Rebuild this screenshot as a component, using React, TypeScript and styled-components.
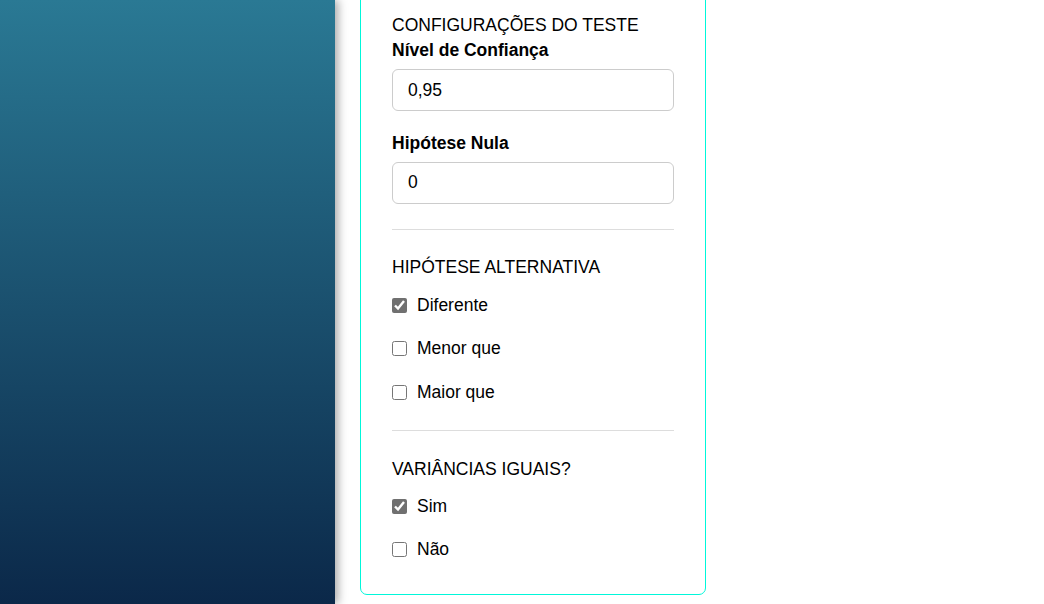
import styled, { createGlobalStyle } from "styled-components";

const GlobalStyle = createGlobalStyle`
  html, body {
    margin: 0;
    padding: 0;
    background: #ffffff;
    font-family: "Liberation Sans", Arial, sans-serif;
    overflow: hidden;
  }
`;

const Page = styled.div`
  display: flex;
  height: 604px;
  overflow: hidden;
`;

const Sidebar = styled.aside`
  flex: 0 0 335px;
  height: 100%;
  background: linear-gradient(180deg, #2a7994 0%, #0b2849 100%);
  box-shadow: 3px 0 9px rgba(0, 0, 0, 0.35);
  position: relative;
  z-index: 1;
`;

const Main = styled.main`
  flex: 1;
  padding-left: 25px;
`;

const Card = styled.section`
  width: 282px;
  margin-top: -19px;
  padding: 32px 31px 32px;
  border: 1.5px solid #00f7da;
  border-radius: 7px;
  background: #fff;
  color: #000;
`;

const SectionTitle = styled.h3<{ $gap?: number }>`
  margin: 0 0 ${(p) => p.$gap ?? 15}px;
  font-size: 17.5px;
  line-height: 22px;
  font-weight: 400;
  text-transform: uppercase;
`;

const FieldLabel = styled.label<{ $top?: number }>`
  display: block;
  margin-top: ${(p) => p.$top ?? 0}px;
  font-size: 17.5px;
  line-height: 20px;
  font-weight: 700;
`;

const TextInput = styled.input`
  display: block;
  box-sizing: border-box;
  width: 100%;
  height: 42px;
  margin-top: 9px;
  padding: 0 15px;
  border: 1px solid #cccccc;
  border-radius: 6px;
  font-family: inherit;
  font-size: 17.5px;
  color: #000;
  outline: none;
`;

const Divider = styled.hr<{ $top?: number; $bottom?: number }>`
  border: 0;
  border-top: 1px solid #dddddd;
  margin: ${(p) => p.$top ?? 25}px 0 ${(p) => p.$bottom ?? 27}px;
`;

const OptionList = styled.div`
  display: flex;
  flex-direction: column;
  gap: 19.5px;
`;

const OptionRow = styled.label`
  display: flex;
  align-items: center;
  gap: 10px;
  height: 24px;
  font-size: 17.5px;
`;

const Check = styled.input`
  width: 15px;
  height: 15px;
  margin: 0;
  accent-color: #707070;
`;

type Option = { label: string; checked: boolean };

const alternativas: Option[] = [
  { label: "Diferente", checked: true },
  { label: "Menor que", checked: false },
  { label: "Maior que", checked: false },
];

const variancias: Option[] = [
  { label: "Sim", checked: true },
  { label: "Não", checked: false },
];

const Options = ({ items }: { items: Option[] }) => (
  <OptionList>
    {items.map((o) => (
      <OptionRow key={o.label}>
        <Check type="checkbox" defaultChecked={o.checked} />
        {o.label}
      </OptionRow>
    ))}
  </OptionList>
);

export default function App() {
  return (
    <>
      <GlobalStyle />
      <Page>
        <Sidebar />
        <Main>
          <Card>
            <SectionTitle $gap={4}>Configurações do teste</SectionTitle>
            <FieldLabel>Nível de Confiança</FieldLabel>
            <TextInput defaultValue="0,95" />
            <FieldLabel $top={21.5}>Hipótese Nula</FieldLabel>
            <TextInput defaultValue="0" />
            <Divider $top={25.5} $bottom={26} />
            <SectionTitle>Hipótese alternativa</SectionTitle>
            <Options items={alternativas} />
            <Divider $top={26} />
            <SectionTitle $gap={14}>Variâncias iguais?</SectionTitle>
            <Options items={variancias} />
          </Card>
        </Main>
      </Page>
    </>
  );
}
